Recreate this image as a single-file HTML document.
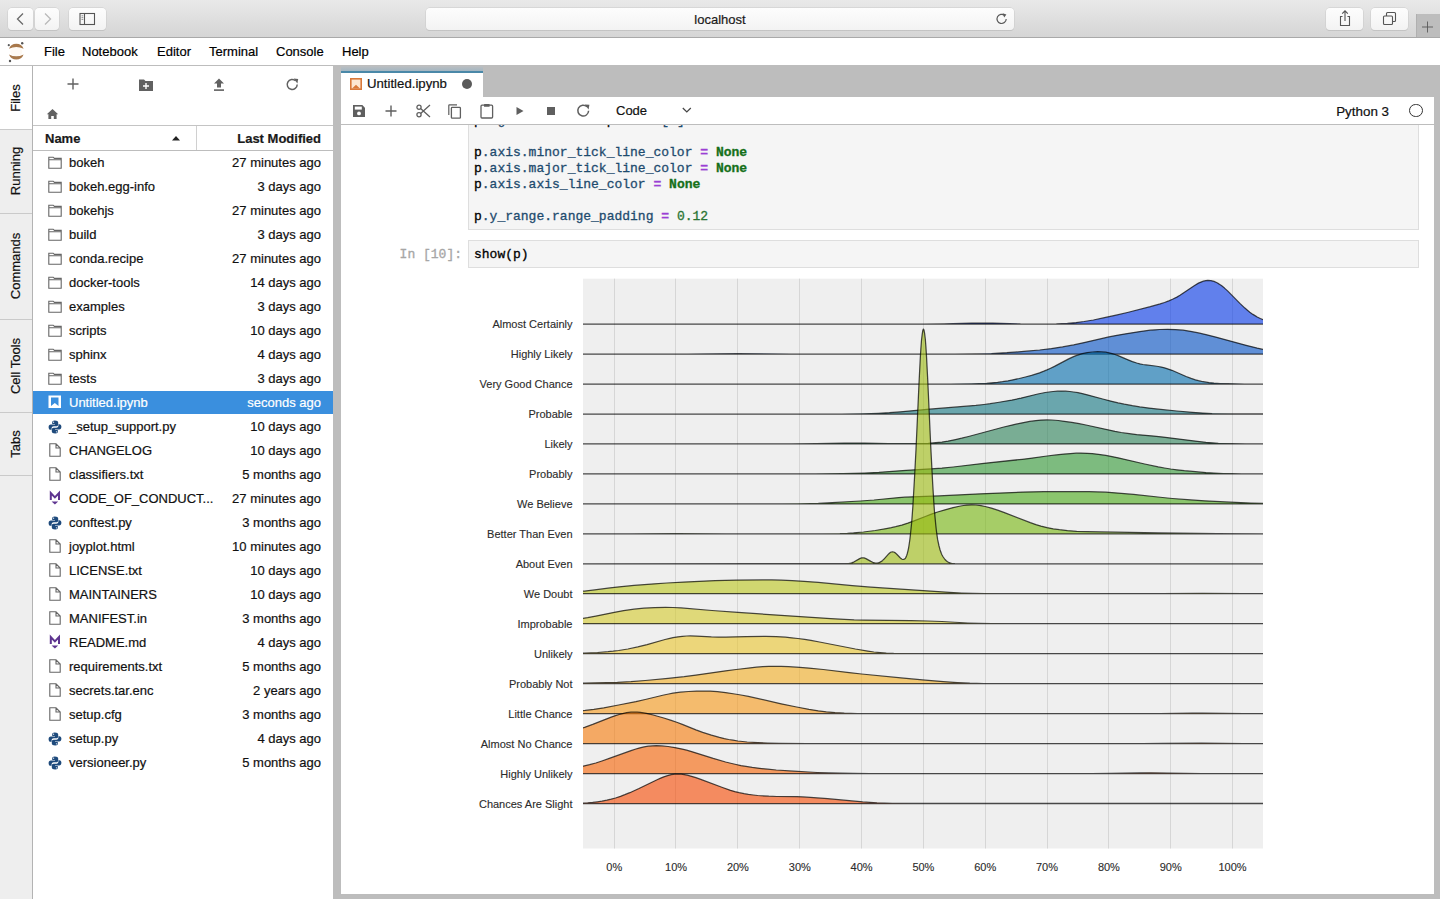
<!DOCTYPE html><html><head><meta charset="utf-8"><style>
*{box-sizing:border-box;margin:0;padding:0}
html,body{width:1440px;height:899px;overflow:hidden;background:#fff;font-family:"Liberation Sans", sans-serif;color:#000}
div{-webkit-text-stroke:0.2px currentColor}
.code{-webkit-text-stroke:0.3px currentColor}
.a{position:absolute}
.btn{position:absolute;top:8px;height:22px;border-radius:4px;background:linear-gradient(#fdfdfd,#f3f3f3);box-shadow:0 0 0 0.5px #c9c9c9,0 1px 0.5px rgba(0,0,0,.12)}
.menu{position:absolute;top:44px;font-size:13px;line-height:16px;color:#000}
.stab{position:absolute;left:0;width:32px;background:#eee;border-bottom:1px solid #c9c9c9}
.stab span{position:absolute;left:calc(50% - 1.5px);top:50%;transform:translate(-50%,-50%) rotate(-90deg);font-size:13px;white-space:nowrap;color:#111}
.row{position:absolute;left:33px;width:300px;height:24px;font-size:13px;color:#111}
.row .n{position:absolute;left:36px;top:4.5px;line-height:16px}
.row .d{position:absolute;right:12px;top:4.5px;line-height:16px}
.row svg{position:absolute;left:15px;top:6px}
.code{font-family:"Liberation Mono", monospace;font-size:13px;line-height:16px;white-space:pre;color:#000}
</style></head><body><div class="a" style="left:0;top:0;width:1440px;height:38px;background:linear-gradient(#e9e9e9,#d5d5d5);border-bottom:1px solid #a9a9a9"></div><div class="btn" style="left:8px;width:25px"></div><div class="btn" style="left:35px;width:24px"></div><svg class="a" style="left:14px;top:12px" width="14" height="14"><path d="M9 1.5 L3.5 7 L9 12.5" fill="none" stroke="#6a6a6a" stroke-width="1.3"/></svg><svg class="a" style="left:40px;top:12px" width="14" height="14"><path d="M5 1.5 L10.5 7 L5 12.5" fill="none" stroke="#b9b9b9" stroke-width="1.3"/></svg><div class="btn" style="left:69px;width:37px"></div><svg class="a" style="left:79px;top:12px" width="17" height="14"><rect x="1" y="1.5" width="14.5" height="11" fill="none" stroke="#555" stroke-width="1.1"/><line x1="5.5" y1="1.5" x2="5.5" y2="12.5" stroke="#555" stroke-width="1.1"/><line x1="2.5" y1="3.8" x2="4.3" y2="3.8" stroke="#777" stroke-width=".8"/><line x1="2.5" y1="5.6" x2="4.3" y2="5.6" stroke="#777" stroke-width=".8"/><line x1="2.5" y1="7.4" x2="4.3" y2="7.4" stroke="#777" stroke-width=".8"/></svg><div class="btn" style="left:426px;width:588px"></div><div class="a" style="left:426px;top:11.5px;width:588px;text-align:center;font-size:13px;line-height:16px;color:#1a1a1a;padding-left:0px">localhost</div><svg class="a" style="left:995px;top:12px" width="14" height="14"><path d="M11.2 7 A4.6 4.6 0 1 1 9.6 3.4" fill="none" stroke="#5a5a5a" stroke-width="1.2"/><path d="M7.6 1.2 L11.4 2.6 L9.2 5.6 Z" fill="#5a5a5a"/></svg><div class="btn" style="left:1326px;width:37px"></div><svg class="a" style="left:1336px;top:9px" width="18" height="18"><path d="M6.5 7.5 H4.5 V16.5 H13.5 V7.5 H11.5" fill="none" stroke="#555" stroke-width="1.1"/><path d="M9 12 V2.2 M6.2 4.6 L9 1.8 L11.8 4.6" fill="none" stroke="#555" stroke-width="1.1"/></svg><div class="btn" style="left:1371px;width:37px"></div><svg class="a" style="left:1381px;top:10px" width="18" height="18"><rect x="2.5" y="6" width="9" height="8.5" rx="1" fill="none" stroke="#555" stroke-width="1.1"/><path d="M5.5 6 V3.5 A1 1 0 0 1 6.5 2.5 H13.5 A1 1 0 0 1 14.5 3.5 V10.5 A1 1 0 0 1 13.5 11.5 H11.5" fill="none" stroke="#555" stroke-width="1.1"/></svg><div class="a" style="left:1416px;top:14px;width:24px;height:23px;background:#bdbdbd;border-left:1px solid #b0b0b0"></div><svg class="a" style="left:1421px;top:20px" width="14" height="14"><path d="M6.5 1.5 V12.5 M1 7 H12" stroke="#5a5a5a" stroke-width="0.9"/></svg><div class="a" style="left:0;top:38px;width:1440px;height:28px;background:#fff;border-bottom:1px solid #bdbdbd"></div><svg class="a" style="left:7px;top:41px" width="20" height="22" viewBox="0 0 20 22">
<ellipse cx="9.3" cy="10.5" rx="6" ry="5" fill="#fef9f3"/>
<path d="M2.0 7.8 A7.8 7.8 0 0 1 16.6 7.8 Q9.3 4.2 2.0 7.8 Z" fill="#a8784a"/>
<path d="M2.0 13.4 A7.8 7.8 0 0 0 16.6 13.4 Q9.3 17.2 2.0 13.4 Z" fill="#a8784a"/>
<circle cx="15.2" cy="2.2" r="1.2" fill="#555"/><circle cx="1.8" cy="4.2" r="1.1" fill="#5a5a5a"/><circle cx="3" cy="20" r="1.2" fill="#555"/>
</svg><div class="menu" style="left:44px">File</div><div class="menu" style="left:82px">Notebook</div><div class="menu" style="left:157px">Editor</div><div class="menu" style="left:209px">Terminal</div><div class="menu" style="left:276px">Console</div><div class="menu" style="left:342px">Help</div><div class="a" style="left:0;top:66px;width:33px;height:833px;background:#eee;border-right:1px solid #b3b3b3"></div><div class="stab" style="top:66px;height:63px;background:#fff;border-bottom:none"><span>Files</span></div><div class="stab" style="top:129px;height:84px;background:#eee;border-bottom:none"><span>Running</span></div><div class="stab" style="top:213px;height:106px;background:#eee;border-bottom:none"><span>Commands</span></div><div class="stab" style="top:319px;height:93px;background:#eee;border-bottom:none"><span>Cell Tools</span></div><div class="stab" style="top:412px;height:63px;background:#eee;border-bottom:none"><span>Tabs</span></div><div class="a" style="left:0;top:129px;width:32px;height:1px;background:#cacaca"></div><div class="a" style="left:0;top:213px;width:32px;height:1px;background:#cacaca"></div><div class="a" style="left:0;top:319px;width:32px;height:1px;background:#cacaca"></div><div class="a" style="left:0;top:412px;width:32px;height:1px;background:#cacaca"></div><div class="a" style="left:0;top:475px;width:32px;height:1px;background:#cacaca"></div><div class="a" style="left:33px;top:66px;width:300px;height:833px;background:#fff"></div><svg class="a" style="left:66px;top:77px" width="14" height="14"><path d="M7 1.5 V12.5 M1.5 7 H12.5" stroke="#616161" stroke-width="1.4"/></svg><svg class="a" style="left:138px;top:77px" width="16" height="16"><path d="M1 2.5 H6 L7.5 4 H15 V14 H1 Z" fill="#616161"/><path d="M8 6 V12 M5 9 H11" stroke="#fff" stroke-width="1.4"/></svg><svg class="a" style="left:212px;top:77px" width="14" height="16"><path d="M7 1.5 L12 6.5 H9 V10.5 H5 V6.5 H2 Z" fill="#616161"/><rect x="2" y="12.3" width="10" height="1.6" fill="#616161"/></svg><svg class="a" style="left:285px;top:77px" width="15" height="15"><path d="M12.2 7.5 A5 5 0 1 1 10.6 3.8" fill="none" stroke="#616161" stroke-width="1.5"/><path d="M8.6 1.6 L13.2 2 L12.4 6.4 Z" fill="#616161"/></svg><svg class="a" style="left:46px;top:108px" width="13" height="12"><path d="M6.5 1 L12.2 6.2 H10.6 V11 H7.8 V8 H5.2 V11 H2.4 V6.2 H0.8 Z" fill="#616161"/></svg><div class="a" style="left:33px;top:125px;width:300px;height:26px;border-top:1px solid #c4c4c4;border-bottom:1px solid #bdbdbd"></div><div class="a" style="left:196px;top:126px;width:1px;height:24px;background:#d0d0d0"></div><div class="a" style="left:45px;top:131px;font-size:13px;line-height:16px;font-weight:bold;color:#1a1a1a">Name</div><svg class="a" style="left:171px;top:135px" width="10" height="6"><path d="M1 5.5 L5 1 L9 5.5 Z" fill="#222"/></svg><div class="a" style="left:200px;top:131px;width:121px;text-align:right;font-size:13px;line-height:16px;font-weight:bold;color:#1a1a1a">Last Modified</div><div class="row" style="top:150px;"><svg width="14" height="13" style="left:15px;top:6px"><path d="M0.8 1.2 H5.2 L6.4 2.4 H13.2 V12.2 H0.8 Z M0.8 3.8 H13.2" fill="none" stroke="#666" stroke-width="1.1"/></svg><div class="n">bokeh</div><div class="d">27 minutes ago</div></div><div class="row" style="top:174px;"><svg width="14" height="13" style="left:15px;top:6px"><path d="M0.8 1.2 H5.2 L6.4 2.4 H13.2 V12.2 H0.8 Z M0.8 3.8 H13.2" fill="none" stroke="#666" stroke-width="1.1"/></svg><div class="n">bokeh.egg-info</div><div class="d">3 days ago</div></div><div class="row" style="top:198px;"><svg width="14" height="13" style="left:15px;top:6px"><path d="M0.8 1.2 H5.2 L6.4 2.4 H13.2 V12.2 H0.8 Z M0.8 3.8 H13.2" fill="none" stroke="#666" stroke-width="1.1"/></svg><div class="n">bokehjs</div><div class="d">27 minutes ago</div></div><div class="row" style="top:222px;"><svg width="14" height="13" style="left:15px;top:6px"><path d="M0.8 1.2 H5.2 L6.4 2.4 H13.2 V12.2 H0.8 Z M0.8 3.8 H13.2" fill="none" stroke="#666" stroke-width="1.1"/></svg><div class="n">build</div><div class="d">3 days ago</div></div><div class="row" style="top:246px;"><svg width="14" height="13" style="left:15px;top:6px"><path d="M0.8 1.2 H5.2 L6.4 2.4 H13.2 V12.2 H0.8 Z M0.8 3.8 H13.2" fill="none" stroke="#666" stroke-width="1.1"/></svg><div class="n">conda.recipe</div><div class="d">27 minutes ago</div></div><div class="row" style="top:270px;"><svg width="14" height="13" style="left:15px;top:6px"><path d="M0.8 1.2 H5.2 L6.4 2.4 H13.2 V12.2 H0.8 Z M0.8 3.8 H13.2" fill="none" stroke="#666" stroke-width="1.1"/></svg><div class="n">docker-tools</div><div class="d">14 days ago</div></div><div class="row" style="top:294px;"><svg width="14" height="13" style="left:15px;top:6px"><path d="M0.8 1.2 H5.2 L6.4 2.4 H13.2 V12.2 H0.8 Z M0.8 3.8 H13.2" fill="none" stroke="#666" stroke-width="1.1"/></svg><div class="n">examples</div><div class="d">3 days ago</div></div><div class="row" style="top:318px;"><svg width="14" height="13" style="left:15px;top:6px"><path d="M0.8 1.2 H5.2 L6.4 2.4 H13.2 V12.2 H0.8 Z M0.8 3.8 H13.2" fill="none" stroke="#666" stroke-width="1.1"/></svg><div class="n">scripts</div><div class="d">10 days ago</div></div><div class="row" style="top:342px;"><svg width="14" height="13" style="left:15px;top:6px"><path d="M0.8 1.2 H5.2 L6.4 2.4 H13.2 V12.2 H0.8 Z M0.8 3.8 H13.2" fill="none" stroke="#666" stroke-width="1.1"/></svg><div class="n">sphinx</div><div class="d">4 days ago</div></div><div class="row" style="top:366px;"><svg width="14" height="13" style="left:15px;top:6px"><path d="M0.8 1.2 H5.2 L6.4 2.4 H13.2 V12.2 H0.8 Z M0.8 3.8 H13.2" fill="none" stroke="#666" stroke-width="1.1"/></svg><div class="n">tests</div><div class="d">3 days ago</div></div><div class="a" style="left:33px;top:391px;width:300px;height:23px;background:#3a8fde"></div><div class="row" style="top:390px;color:#fff;"><svg width="14" height="14" style="left:15px;top:5px"><rect x="0.5" y="0.5" width="12.5" height="12.5" fill="#fff"/><path d="M3 2.5 H10.5 V11 L6.8 8 L3 11 Z" fill="#3a8fde"/></svg><div class="n">Untitled.ipynb</div><div class="d">seconds ago</div></div><div class="row" style="top:414px;"><svg width="14" height="14" style="left:15px;top:5.5px" viewBox="0 0 14 14"><path d="M6.8 0.6 C4.4 0.6 4.2 1.6 4.2 2.6 V4 H7 V4.6 H2.8 C1.4 4.6 0.6 5.6 0.6 7.2 C0.6 8.8 1.4 9.8 2.6 9.8 H3.6 V8.2 C3.6 7 4.6 6.2 5.8 6.2 H8.4 C9.4 6.2 10.2 5.4 10.2 4.4 V2.6 C10.2 1.4 9 0.6 6.8 0.6 Z" fill="#1e4a7c"/><path d="M7.2 13.4 C9.6 13.4 9.8 12.4 9.8 11.4 V10 H7 V9.4 H11.2 C12.6 9.4 13.4 8.4 13.4 6.8 C13.4 5.2 12.6 4.2 11.4 4.2 H10.4 V5.8 C10.4 7 9.4 7.8 8.2 7.8 H5.6 C4.6 7.8 3.8 8.6 3.8 9.6 V11.4 C3.8 12.6 5 13.4 7.2 13.4 Z" fill="#1e4a7c"/><circle cx="5.6" cy="2.2" r="0.6" fill="#fff"/><circle cx="8.4" cy="11.8" r="0.6" fill="#fff"/></svg><div class="n">_setup_support.py</div><div class="d">10 days ago</div></div><div class="row" style="top:438px;"><svg width="14" height="14" style="left:15px;top:5px"><path d="M1.8 0.8 H8 L12.2 5 V13.2 H1.8 Z M8 0.8 V5 H12.2" fill="none" stroke="#666" stroke-width="1.1"/></svg><div class="n">CHANGELOG</div><div class="d">10 days ago</div></div><div class="row" style="top:462px;"><svg width="14" height="14" style="left:15px;top:5px"><path d="M1.8 0.8 H8 L12.2 5 V13.2 H1.8 Z M8 0.8 V5 H12.2" fill="none" stroke="#666" stroke-width="1.1"/></svg><div class="n">classifiers.txt</div><div class="d">5 months ago</div></div><div class="row" style="top:486px;"><svg width="14" height="16" style="left:15px;top:4px" viewBox="0 0 14 16"><path d="M2.8 10 V3 L6.9 7.4 L11 3 V10" fill="none" stroke="#5e3590" stroke-width="2" stroke-linejoin="miter" stroke-miterlimit="3"/><path d="M3.6 11.4 H10.2 L6.9 14.4 Z" fill="#5e3590"/></svg><div class="n">CODE_OF_CONDUCT...</div><div class="d">27 minutes ago</div></div><div class="row" style="top:510px;"><svg width="14" height="14" style="left:15px;top:5.5px" viewBox="0 0 14 14"><path d="M6.8 0.6 C4.4 0.6 4.2 1.6 4.2 2.6 V4 H7 V4.6 H2.8 C1.4 4.6 0.6 5.6 0.6 7.2 C0.6 8.8 1.4 9.8 2.6 9.8 H3.6 V8.2 C3.6 7 4.6 6.2 5.8 6.2 H8.4 C9.4 6.2 10.2 5.4 10.2 4.4 V2.6 C10.2 1.4 9 0.6 6.8 0.6 Z" fill="#1e4a7c"/><path d="M7.2 13.4 C9.6 13.4 9.8 12.4 9.8 11.4 V10 H7 V9.4 H11.2 C12.6 9.4 13.4 8.4 13.4 6.8 C13.4 5.2 12.6 4.2 11.4 4.2 H10.4 V5.8 C10.4 7 9.4 7.8 8.2 7.8 H5.6 C4.6 7.8 3.8 8.6 3.8 9.6 V11.4 C3.8 12.6 5 13.4 7.2 13.4 Z" fill="#1e4a7c"/><circle cx="5.6" cy="2.2" r="0.6" fill="#fff"/><circle cx="8.4" cy="11.8" r="0.6" fill="#fff"/></svg><div class="n">conftest.py</div><div class="d">3 months ago</div></div><div class="row" style="top:534px;"><svg width="14" height="14" style="left:15px;top:5px"><path d="M1.8 0.8 H8 L12.2 5 V13.2 H1.8 Z M8 0.8 V5 H12.2" fill="none" stroke="#666" stroke-width="1.1"/></svg><div class="n">joyplot.html</div><div class="d">10 minutes ago</div></div><div class="row" style="top:558px;"><svg width="14" height="14" style="left:15px;top:5px"><path d="M1.8 0.8 H8 L12.2 5 V13.2 H1.8 Z M8 0.8 V5 H12.2" fill="none" stroke="#666" stroke-width="1.1"/></svg><div class="n">LICENSE.txt</div><div class="d">10 days ago</div></div><div class="row" style="top:582px;"><svg width="14" height="14" style="left:15px;top:5px"><path d="M1.8 0.8 H8 L12.2 5 V13.2 H1.8 Z M8 0.8 V5 H12.2" fill="none" stroke="#666" stroke-width="1.1"/></svg><div class="n">MAINTAINERS</div><div class="d">10 days ago</div></div><div class="row" style="top:606px;"><svg width="14" height="14" style="left:15px;top:5px"><path d="M1.8 0.8 H8 L12.2 5 V13.2 H1.8 Z M8 0.8 V5 H12.2" fill="none" stroke="#666" stroke-width="1.1"/></svg><div class="n">MANIFEST.in</div><div class="d">3 months ago</div></div><div class="row" style="top:630px;"><svg width="14" height="16" style="left:15px;top:4px" viewBox="0 0 14 16"><path d="M2.8 10 V3 L6.9 7.4 L11 3 V10" fill="none" stroke="#5e3590" stroke-width="2" stroke-linejoin="miter" stroke-miterlimit="3"/><path d="M3.6 11.4 H10.2 L6.9 14.4 Z" fill="#5e3590"/></svg><div class="n">README.md</div><div class="d">4 days ago</div></div><div class="row" style="top:654px;"><svg width="14" height="14" style="left:15px;top:5px"><path d="M1.8 0.8 H8 L12.2 5 V13.2 H1.8 Z M8 0.8 V5 H12.2" fill="none" stroke="#666" stroke-width="1.1"/></svg><div class="n">requirements.txt</div><div class="d">5 months ago</div></div><div class="row" style="top:678px;"><svg width="14" height="14" style="left:15px;top:5px"><path d="M1.8 0.8 H8 L12.2 5 V13.2 H1.8 Z M8 0.8 V5 H12.2" fill="none" stroke="#666" stroke-width="1.1"/></svg><div class="n">secrets.tar.enc</div><div class="d">2 years ago</div></div><div class="row" style="top:702px;"><svg width="14" height="14" style="left:15px;top:5px"><path d="M1.8 0.8 H8 L12.2 5 V13.2 H1.8 Z M8 0.8 V5 H12.2" fill="none" stroke="#666" stroke-width="1.1"/></svg><div class="n">setup.cfg</div><div class="d">3 months ago</div></div><div class="row" style="top:726px;"><svg width="14" height="14" style="left:15px;top:5.5px" viewBox="0 0 14 14"><path d="M6.8 0.6 C4.4 0.6 4.2 1.6 4.2 2.6 V4 H7 V4.6 H2.8 C1.4 4.6 0.6 5.6 0.6 7.2 C0.6 8.8 1.4 9.8 2.6 9.8 H3.6 V8.2 C3.6 7 4.6 6.2 5.8 6.2 H8.4 C9.4 6.2 10.2 5.4 10.2 4.4 V2.6 C10.2 1.4 9 0.6 6.8 0.6 Z" fill="#1e4a7c"/><path d="M7.2 13.4 C9.6 13.4 9.8 12.4 9.8 11.4 V10 H7 V9.4 H11.2 C12.6 9.4 13.4 8.4 13.4 6.8 C13.4 5.2 12.6 4.2 11.4 4.2 H10.4 V5.8 C10.4 7 9.4 7.8 8.2 7.8 H5.6 C4.6 7.8 3.8 8.6 3.8 9.6 V11.4 C3.8 12.6 5 13.4 7.2 13.4 Z" fill="#1e4a7c"/><circle cx="5.6" cy="2.2" r="0.6" fill="#fff"/><circle cx="8.4" cy="11.8" r="0.6" fill="#fff"/></svg><div class="n">setup.py</div><div class="d">4 days ago</div></div><div class="row" style="top:750px;"><svg width="14" height="14" style="left:15px;top:5.5px" viewBox="0 0 14 14"><path d="M6.8 0.6 C4.4 0.6 4.2 1.6 4.2 2.6 V4 H7 V4.6 H2.8 C1.4 4.6 0.6 5.6 0.6 7.2 C0.6 8.8 1.4 9.8 2.6 9.8 H3.6 V8.2 C3.6 7 4.6 6.2 5.8 6.2 H8.4 C9.4 6.2 10.2 5.4 10.2 4.4 V2.6 C10.2 1.4 9 0.6 6.8 0.6 Z" fill="#1e4a7c"/><path d="M7.2 13.4 C9.6 13.4 9.8 12.4 9.8 11.4 V10 H7 V9.4 H11.2 C12.6 9.4 13.4 8.4 13.4 6.8 C13.4 5.2 12.6 4.2 11.4 4.2 H10.4 V5.8 C10.4 7 9.4 7.8 8.2 7.8 H5.6 C4.6 7.8 3.8 8.6 3.8 9.6 V11.4 C3.8 12.6 5 13.4 7.2 13.4 Z" fill="#1e4a7c"/><circle cx="5.6" cy="2.2" r="0.6" fill="#fff"/><circle cx="8.4" cy="11.8" r="0.6" fill="#fff"/></svg><div class="n">versioneer.py</div><div class="d">5 months ago</div></div><div class="a" style="left:333px;top:66px;width:1107px;height:833px;background:#bdbdbd"></div><div class="a" style="left:341px;top:66px;width:142px;height:5px;background:linear-gradient(#bdbfc1,#a3b6c2)"></div><div class="a" style="left:341px;top:71px;width:142px;height:27px;background:#fff;border-top:2px solid #4a88a8"></div><svg class="a" style="left:350px;top:78px" width="12" height="12"><rect x="0.8" y="0.8" width="10.4" height="10.4" fill="#fde7d3" stroke="#d9793a" stroke-width="1.6"/><path d="M2 10.5 L6 6.8 L10 10.5 Z" fill="#d9793a"/></svg><div class="a" style="left:367px;top:76px;font-size:13.2px;line-height:16px;color:#111">Untitled.ipynb</div><div class="a" style="left:462px;top:79px;width:10px;height:10px;border-radius:50%;background:#5a5a5a"></div><div class="a" style="left:341px;top:97px;width:1093px;height:797px;background:#fff"></div><div class="a" style="left:341px;top:97px;width:1093px;height:28px;background:#fff;border-bottom:1px solid #bdbdbd"></div><svg class="a" style="left:353px;top:105px" width="12" height="12"><path d="M0 0 H9.3 L12 2.7 V12 H0 Z" fill="#5f5f5f"/><rect x="1.8" y="1.6" width="7" height="3" fill="#fff"/><circle cx="6" cy="8.4" r="1.9" fill="#fff"/></svg><svg class="a" style="left:385px;top:105px" width="12" height="12"><path d="M6 0.5 V11.5 M0.5 6 H11.5" stroke="#5f5f5f" stroke-width="1.4"/></svg><svg class="a" style="left:416px;top:104px" width="15" height="14"><circle cx="3" cy="3.2" r="2.1" fill="none" stroke="#5f5f5f" stroke-width="1.3"/><circle cx="3" cy="10.8" r="2.1" fill="none" stroke="#5f5f5f" stroke-width="1.3"/><path d="M4.6 4.6 L14 13 M4.6 9.4 L14 1" stroke="#5f5f5f" stroke-width="1.3"/></svg><svg class="a" style="left:448px;top:104px" width="14" height="15"><path d="M0.8 11 V1.4 A0.6 0.6 0 0 1 1.4 0.8 H9" fill="none" stroke="#5f5f5f" stroke-width="1.2"/><rect x="3.4" y="3.4" width="9" height="10.8" rx="0.8" fill="none" stroke="#5f5f5f" stroke-width="1.3"/></svg><svg class="a" style="left:480px;top:103px" width="14" height="16"><rect x="1" y="2.2" width="11.6" height="12.8" rx="1" fill="none" stroke="#5f5f5f" stroke-width="1.3"/><rect x="4" y="1" width="5.6" height="2.8" rx="0.6" fill="#5f5f5f"/></svg><svg class="a" style="left:515px;top:106px" width="10" height="10"><path d="M1.5 1 L8.5 5 L1.5 9 Z" fill="#5f5f5f"/></svg><svg class="a" style="left:546px;top:106px" width="10" height="10"><rect x="1" y="1" width="8" height="8" fill="#5f5f5f"/></svg><svg class="a" style="left:576px;top:103px" width="15" height="15"><path d="M12.6 7.8 A5.4 5.4 0 1 1 11 3.8" fill="none" stroke="#5f5f5f" stroke-width="1.5"/><path d="M8.8 1.4 L13.4 1.8 L12.6 6.4 Z" fill="#5f5f5f"/></svg><div class="a" style="left:616px;top:103px;font-size:13px;line-height:16px;color:#111">Code</div><svg class="a" style="left:682px;top:107px" width="10" height="7"><path d="M0.8 1 L4.8 5 L8.8 1" fill="none" stroke="#444" stroke-width="1.2"/></svg><div class="a" style="left:1320px;top:103.5px;width:69px;text-align:right;font-size:13.4px;line-height:16px;color:#111">Python 3</div><div class="a" style="left:1409px;top:103.5px;width:13.5px;height:13.5px;border-radius:50%;border:1.3px solid #333"></div><div class="a" style="left:341px;top:125px;width:1093px;height:769px;overflow:hidden"><div class="a" style="left:127px;top:-40px;width:951px;height:145px;background:#f5f5f5;border:1px solid #dedede"></div><div class="a code" style="left:133px;top:-12.5px"><span style="color:#000;">p</span><span style="color:#1e4b6e;">.xgrid.ticker</span> <span style="color:#9b3fd4;font-weight:bold;">=</span> <span style="color:#000;">p</span><span style="color:#1e4b6e;">.xaxis[</span><span style="color:#2a7432;">0</span><span style="color:#1e4b6e;">].ticker</span>

<span style="color:#000;">p</span><span style="color:#1e4b6e;">.axis.minor_tick_line_color</span> <span style="color:#9b3fd4;font-weight:bold;">=</span> <span style="color:#16701a;font-weight:bold;">None</span>
<span style="color:#000;">p</span><span style="color:#1e4b6e;">.axis.major_tick_line_color</span> <span style="color:#9b3fd4;font-weight:bold;">=</span> <span style="color:#16701a;font-weight:bold;">None</span>
<span style="color:#000;">p</span><span style="color:#1e4b6e;">.axis.axis_line_color</span> <span style="color:#9b3fd4;font-weight:bold;">=</span> <span style="color:#16701a;font-weight:bold;">None</span>

<span style="color:#000;">p</span><span style="color:#1e4b6e;">.y_range.range_padding</span> <span style="color:#9b3fd4;font-weight:bold;">=</span> <span style="color:#2a7432;">0.12</span></div><div class="a" style="left:127px;top:115px;width:951px;height:28px;background:#f5f5f5;border:1px solid #dedede"></div><div class="a code" style="left:133px;top:121.5px">show(p)</div><div class="a code" style="left:41px;top:121.5px;width:80px;text-align:right;color:#a6a6a6">In [10]:</div></div><svg class="a" style="left:0;top:0" width="1440" height="899" viewBox="0 0 1440 899"><defs><clipPath id="pc"><rect x="583.0" y="278.7" width="680.0" height="569.8"/></clipPath></defs><rect x="583.0" y="278.7" width="680.0" height="569.8" fill="#efefef"/><line x1="614.5" y1="278.7" x2="614.5" y2="848.5" stroke="#d6d6d6" stroke-width="1"/><line x1="675.5" y1="278.7" x2="675.5" y2="848.5" stroke="#d6d6d6" stroke-width="1"/><line x1="737.5" y1="278.7" x2="737.5" y2="848.5" stroke="#d6d6d6" stroke-width="1"/><line x1="799.5" y1="278.7" x2="799.5" y2="848.5" stroke="#d6d6d6" stroke-width="1"/><line x1="861.5" y1="278.7" x2="861.5" y2="848.5" stroke="#d6d6d6" stroke-width="1"/><line x1="923.5" y1="278.7" x2="923.5" y2="848.5" stroke="#d6d6d6" stroke-width="1"/><line x1="985.5" y1="278.7" x2="985.5" y2="848.5" stroke="#d6d6d6" stroke-width="1"/><line x1="1047.5" y1="278.7" x2="1047.5" y2="848.5" stroke="#d6d6d6" stroke-width="1"/><line x1="1108.5" y1="278.7" x2="1108.5" y2="848.5" stroke="#d6d6d6" stroke-width="1"/><line x1="1170.5" y1="278.7" x2="1170.5" y2="848.5" stroke="#d6d6d6" stroke-width="1"/><line x1="1232.5" y1="278.7" x2="1232.5" y2="848.5" stroke="#d6d6d6" stroke-width="1"/><g clip-path="url(#pc)"><path d="M564.8 324.1L923.4 324.1L943.8 323.9L971.6 323.1L982.1 323.0L992.6 323.1L1020.5 323.9L1040.9 324.0L1056.3 323.9L1067.4 323.4L1076.1 322.6L1084.1 321.5L1093.4 320.0L1104.5 317.7L1115.0 315.4L1127.4 312.5L1150.3 306.7L1160.2 303.9L1164.5 302.5L1168.8 300.9L1172.5 299.3L1176.9 297.1L1180.0 295.3L1183.0 293.3L1194.2 285.7L1198.5 283.1L1201.6 281.8L1203.4 281.2L1205.9 280.6L1207.8 280.4L1210.9 280.6L1214.0 281.4L1217.0 282.8L1218.9 283.9L1221.4 285.6L1224.5 288.1L1227.6 290.9L1239.9 303.4L1244.9 308.1L1248.0 310.7L1249.8 312.2L1252.9 314.4L1255.4 315.9L1257.2 317.0L1260.3 318.5L1263.4 319.8L1266.5 320.9L1269.6 321.7L1273.9 322.6L1277.6 323.1L1282.0 323.5L1282.0 324.1Z" fill="#0236ea" fill-opacity="0.6" stroke="#000" stroke-opacity="0.7" stroke-width="1.25" stroke-linejoin="round"/><path d="M564.8 354.1L686.6 354.0L737.9 353.7L791.7 354.0L954.3 354.1L975.9 353.9L991.4 353.5L1006.9 352.7L1026.6 351.2L1039.6 350.0L1051.4 348.6L1062.5 346.9L1073.6 344.9L1084.1 342.6L1108.9 336.9L1116.9 335.3L1125.6 333.8L1139.8 331.6L1150.3 330.2L1155.2 329.8L1159.6 329.5L1167.6 329.3L1175.6 329.6L1183.0 330.2L1190.5 331.3L1198.5 332.9L1205.9 334.6L1215.8 337.1L1246.1 345.3L1257.2 348.1L1263.4 349.5L1269.6 350.7L1275.8 351.7L1282.0 352.5L1282.0 354.1Z" fill="#004fc5" fill-opacity="0.6" stroke="#000" stroke-opacity="0.7" stroke-width="1.25" stroke-linejoin="round"/><path d="M564.8 384.0L950.0 384.0L971.6 383.8L979.0 383.6L986.5 383.3L991.4 382.9L997.6 382.3L1002.5 381.7L1008.1 380.8L1013.0 379.8L1019.2 378.5L1025.4 377.0L1031.6 375.4L1039.6 372.8L1043.9 371.2L1047.0 369.9L1050.1 368.5L1054.5 366.4L1068.7 358.9L1073.0 356.9L1076.7 355.4L1079.2 354.6L1082.3 353.7L1087.2 352.6L1092.2 352.0L1095.3 351.8L1097.7 351.7L1101.4 351.8L1105.8 352.2L1108.9 352.8L1112.0 353.6L1115.0 354.5L1118.1 355.7L1128.6 360.1L1132.4 361.6L1136.7 363.0L1139.8 363.8L1142.9 364.5L1146.0 364.9L1155.2 366.0L1158.3 366.5L1161.4 367.1L1164.5 367.8L1167.6 368.8L1171.9 370.3L1186.1 376.5L1191.1 378.4L1195.4 379.8L1198.5 380.7L1201.6 381.4L1204.7 381.9L1209.0 382.6L1214.0 383.1L1220.1 383.5L1227.6 383.7L1244.9 384.0L1282.0 384.0Z" fill="#006aab" fill-opacity="0.6" stroke="#000" stroke-opacity="0.7" stroke-width="1.25" stroke-linejoin="round"/><path d="M564.8 414.0L841.2 414.0L861.6 413.8L870.9 413.6L878.3 413.3L889.4 412.7L900.5 411.8L929.6 409.2L966.7 406.2L975.9 405.4L984.0 404.5L990.2 403.7L997.6 402.5L1011.8 400.1L1021.1 398.1L1037.8 394.0L1045.2 392.5L1048.9 392.0L1053.2 391.5L1057.5 391.2L1061.3 391.1L1065.6 391.2L1069.9 391.5L1073.6 392.0L1078.0 392.7L1082.3 393.6L1087.2 394.8L1102.7 399.0L1110.7 401.1L1118.1 402.9L1124.3 404.2L1132.4 405.7L1139.8 406.9L1149.0 408.1L1158.3 409.2L1176.9 411.0L1192.3 412.3L1202.8 413.0L1212.1 413.5L1222.0 413.8L1233.7 413.9L1282.0 414.0Z" fill="#117481" fill-opacity="0.6" stroke="#000" stroke-opacity="0.7" stroke-width="1.25" stroke-linejoin="round"/><path d="M564.8 443.9L791.7 443.9L816.5 443.7L844.3 443.1L854.2 443.0L864.7 443.1L888.2 443.5L903.0 443.6L917.2 443.6L928.3 443.3L935.8 442.7L941.9 442.1L948.1 441.1L955.5 439.6L961.7 438.2L968.5 436.5L1003.8 427.0L1013.0 424.8L1022.3 422.8L1029.7 421.4L1035.9 420.6L1040.9 420.1L1047.0 419.9L1052.0 420.0L1058.2 420.5L1064.3 421.3L1071.8 422.4L1079.2 423.7L1086.0 425.0L1115.0 431.3L1121.2 432.5L1127.4 433.4L1136.7 434.6L1154.0 436.1L1163.3 437.1L1197.3 441.3L1205.9 442.3L1212.1 442.8L1218.3 443.3L1230.6 443.7L1246.1 443.9L1282.0 443.9Z" fill="#298157" fill-opacity="0.6" stroke="#000" stroke-opacity="0.7" stroke-width="1.25" stroke-linejoin="round"/><path d="M564.8 473.9L815.2 473.9L843.0 473.6L864.7 473.0L878.9 472.3L906.1 470.3L930.8 468.9L941.9 468.1L953.1 467.0L984.0 463.3L1022.3 459.3L1030.3 458.3L1047.0 456.0L1056.3 454.9L1063.7 454.1L1070.5 453.6L1076.1 453.2L1081.0 453.1L1087.2 453.3L1092.2 453.6L1098.4 454.3L1105.8 455.4L1112.0 456.6L1118.1 457.8L1144.7 464.0L1158.3 466.9L1164.5 468.0L1170.7 469.0L1176.9 469.8L1184.3 470.7L1195.4 471.7L1205.9 472.6L1214.0 473.1L1223.2 473.5L1231.3 473.7L1241.8 473.9L1282.0 473.9Z" fill="#319733" fill-opacity="0.6" stroke="#000" stroke-opacity="0.7" stroke-width="1.25" stroke-linejoin="round"/><path d="M564.8 503.9L781.2 503.9L797.9 503.8L810.3 503.6L818.3 503.4L827.6 502.9L860.3 501.0L873.9 500.0L898.7 497.6L904.9 497.2L912.3 496.8L938.9 495.9L980.3 493.8L1022.3 492.1L1033.4 491.8L1043.9 491.7L1078.0 491.7L1089.1 491.7L1097.7 491.9L1105.8 492.2L1115.0 492.8L1133.6 494.4L1162.6 497.5L1172.5 498.5L1187.4 499.7L1204.7 500.8L1220.1 501.7L1251.0 503.1L1263.4 503.5L1282.0 503.8L1282.0 503.9Z" fill="#48a916" fill-opacity="0.6" stroke="#000" stroke-opacity="0.7" stroke-width="1.25" stroke-linejoin="round"/><path d="M564.8 533.8L629.8 533.8L676.1 533.5L726.8 533.8L821.4 533.8L839.9 533.6L847.4 533.3L853.5 532.9L863.4 532.0L875.2 530.5L886.3 528.6L891.3 527.7L895.6 526.7L901.8 525.1L907.9 523.1L914.1 520.8L925.3 516.5L931.4 514.1L937.6 512.0L945.0 509.8L953.1 507.6L960.5 506.0L963.6 505.5L966.7 505.1L971.6 504.9L975.9 505.0L980.9 505.6L985.2 506.5L991.4 508.2L997.6 510.2L1003.8 512.4L1030.3 522.7L1035.9 524.6L1040.9 526.1L1047.0 527.6L1053.2 528.8L1059.4 529.7L1067.4 530.6L1076.7 531.3L1087.2 531.7L1158.3 532.9L1217.0 533.7L1282.0 533.8Z" fill="#75b60b" fill-opacity="0.6" stroke="#000" stroke-opacity="0.7" stroke-width="1.25" stroke-linejoin="round"/><path d="M564.8 563.8L844.3 563.7L848.6 563.5L850.5 563.1L851.7 562.8L854.2 561.8L859.7 558.6L861.6 557.9L862.8 557.8L864.1 557.9L865.9 558.6L870.9 561.4L872.7 562.3L874.6 562.8L876.4 563.0L877.7 562.9L878.9 562.6L880.1 562.1L881.4 561.4L882.6 560.4L883.8 559.3L888.2 554.4L889.4 553.2L890.6 552.3L891.3 552.0L892.5 551.8L893.7 552.0L894.3 552.3L895.6 553.1L896.8 554.3L899.9 557.5L901.1 558.6L901.8 559.0L902.4 559.3L903.0 559.5L903.6 559.4L904.2 559.2L904.9 558.8L905.5 558.0L906.1 556.9L906.7 555.4L907.3 553.5L907.9 551.1L908.6 548.0L909.8 540.0L910.4 534.9L911.7 522.2L912.9 505.9L914.7 474.5L916.0 449.5L919.1 381.5L920.3 357.9L920.9 348.2L921.5 340.2L922.2 334.3L922.8 330.5L923.4 329.1L924.0 330.1L924.6 333.4L925.3 339.0L925.9 346.6L926.5 356.1L927.7 379.3L930.8 447.5L932.7 483.9L933.9 503.6L934.5 511.8L935.8 525.4L936.4 530.8L937.6 539.4L938.9 545.5L940.1 550.0L941.3 553.3L941.9 554.7L943.2 557.0L945.0 559.5L946.3 560.8L947.5 561.7L949.4 562.7L950.6 563.1L951.8 563.3L954.9 563.7L960.5 563.8L1282.0 563.8Z" fill="#9cbb0e" fill-opacity="0.6" stroke="#000" stroke-opacity="0.7" stroke-width="1.25" stroke-linejoin="round"/><path d="M564.8 593.7L564.8 592.4L576.0 591.8L584.6 591.1L592.7 590.2L610.0 587.9L619.2 586.8L634.1 585.4L654.5 583.8L666.8 583.0L683.5 582.1L715.1 580.6L736.1 580.1L762.7 579.9L771.9 579.9L781.2 580.2L792.3 580.7L804.1 581.3L818.3 582.4L852.3 585.7L870.9 587.2L949.4 592.3L961.7 593.0L972.9 593.4L985.2 593.6L1000.7 593.7L1136.7 593.7L1161.4 593.7L1202.8 593.3L1243.6 593.7L1282.0 593.7Z" fill="#bac71b" fill-opacity="0.6" stroke="#000" stroke-opacity="0.7" stroke-width="1.25" stroke-linejoin="round"/><path d="M564.8 623.7L564.8 620.3L577.2 619.1L582.2 618.4L587.7 617.6L595.8 616.1L614.3 612.3L623.6 610.6L634.1 609.2L644.0 608.2L654.5 607.6L665.6 607.3L673.0 607.5L681.1 607.9L712.0 610.5L737.9 612.4L830.7 618.6L844.3 619.4L854.2 619.9L864.7 620.1L911.0 620.6L927.7 621.0L941.9 621.5L967.9 623.0L979.0 623.4L991.4 623.6L1009.9 623.7L1282.0 623.7Z" fill="#d4ca29" fill-opacity="0.6" stroke="#000" stroke-opacity="0.7" stroke-width="1.25" stroke-linejoin="round"/><path d="M564.8 653.7L564.8 653.5L575.4 653.4L584.6 653.1L597.6 652.5L608.1 651.7L613.1 651.2L618.6 650.5L627.9 649.0L637.8 646.9L647.1 644.6L665.0 639.5L669.9 638.3L673.0 637.7L678.0 636.8L682.3 636.3L686.6 636.0L690.3 635.9L696.5 636.1L711.4 636.9L718.2 637.1L725.6 637.1L746.0 636.6L765.8 636.4L776.3 636.6L785.5 637.2L791.7 637.8L797.9 638.5L804.7 639.4L810.9 640.4L819.5 642.0L855.4 649.0L867.8 651.1L873.9 652.0L880.1 652.6L886.3 653.1L893.7 653.4L904.9 653.6L922.2 653.7L1282.0 653.7Z" fill="#eac52c" fill-opacity="0.6" stroke="#000" stroke-opacity="0.7" stroke-width="1.25" stroke-linejoin="round"/><path d="M564.8 683.6L564.8 683.5L584.6 683.1L617.4 682.3L631.0 681.6L645.2 680.5L668.1 678.4L684.2 676.7L695.9 675.1L725.6 670.8L736.1 669.5L750.3 667.8L756.5 667.2L762.7 666.7L768.8 666.3L773.8 666.3L781.2 666.4L788.6 666.7L799.8 667.4L809.0 668.1L823.3 669.5L849.2 672.6L861.6 674.0L903.6 678.2L925.3 680.2L943.2 681.6L957.4 682.6L969.8 683.2L984.0 683.5L1003.8 683.6L1282.0 683.6Z" fill="#f4ae20" fill-opacity="0.6" stroke="#000" stroke-opacity="0.7" stroke-width="1.25" stroke-linejoin="round"/><path d="M564.8 713.6L564.8 711.8L576.0 711.2L585.2 710.4L593.9 709.3L603.8 707.8L618.6 705.0L635.9 701.6L645.2 699.5L663.8 695.0L668.7 694.0L673.0 693.2L680.4 692.2L688.5 691.5L696.5 691.1L703.9 691.0L710.1 691.1L717.5 691.7L725.6 692.6L734.8 694.0L741.0 695.0L748.4 696.4L781.2 703.8L796.7 707.0L809.0 709.3L818.3 710.8L826.3 711.8L835.0 712.6L844.3 713.1L857.3 713.5L877.0 713.6L1129.3 713.6L1160.2 713.5L1192.3 713.1L1202.8 713.0L1243.6 713.5L1282.0 713.6Z" fill="#f79815" fill-opacity="0.6" stroke="#000" stroke-opacity="0.7" stroke-width="1.25" stroke-linejoin="round"/><path d="M564.8 743.5L564.8 732.5L575.4 730.0L580.3 728.6L584.6 727.3L592.7 724.4L611.2 717.1L615.5 715.6L619.2 714.5L623.6 713.3L626.7 712.7L631.0 712.2L634.7 712.0L637.2 712.1L640.3 712.4L643.4 712.8L646.4 713.4L653.2 715.0L663.8 718.0L671.2 720.4L677.4 722.5L682.3 724.4L695.9 729.9L702.7 732.4L711.4 735.2L719.4 737.4L724.3 738.6L728.7 739.5L733.0 740.2L737.9 741.0L747.2 742.0L757.7 742.6L767.6 743.0L779.4 743.3L807.2 743.5L1142.9 743.5L1163.3 743.4L1201.6 743.0L1243.6 743.5L1282.0 743.5Z" fill="#f77a07" fill-opacity="0.6" stroke="#000" stroke-opacity="0.7" stroke-width="1.25" stroke-linejoin="round"/><path d="M564.8 773.5L564.8 768.8L572.3 767.9L578.4 767.0L583.4 766.1L589.6 764.7L595.8 763.0L601.9 761.0L610.0 758.2L631.0 750.7L635.9 749.0L639.0 748.1L644.0 746.9L648.3 746.2L652.6 745.8L656.3 745.7L661.9 745.9L668.1 746.5L674.9 747.6L682.3 749.1L686.6 750.2L691.6 751.6L713.2 758.4L725.6 762.0L731.8 763.5L736.1 764.5L741.0 765.6L746.0 766.4L752.2 767.4L759.6 768.3L767.6 769.2L776.3 770.0L793.6 771.2L817.1 772.5L828.8 772.9L839.9 773.2L853.5 773.4L869.6 773.5L1091.6 773.5L1110.7 773.4L1139.8 772.9L1150.9 772.8L1201.6 773.5L1282.0 773.5Z" fill="#f76000" fill-opacity="0.6" stroke="#000" stroke-opacity="0.7" stroke-width="1.25" stroke-linejoin="round"/><path d="M564.8 803.5L581.5 803.1L587.7 802.8L592.7 802.4L597.6 801.8L601.9 801.2L606.9 800.2L611.2 799.2L615.5 798.0L620.5 796.3L624.8 794.7L629.8 792.7L639.0 788.5L657.6 779.5L660.7 778.1L663.8 776.8L666.8 775.8L671.2 774.7L674.9 774.2L678.0 774.0L681.1 774.2L684.2 774.6L687.2 775.2L691.6 776.3L695.9 777.7L700.8 779.4L722.5 787.5L730.5 790.3L734.8 791.6L739.2 792.7L744.1 793.7L748.4 794.4L753.4 795.0L757.7 795.5L768.8 796.2L776.9 796.5L796.7 796.7L802.9 796.9L810.3 797.4L827.6 798.7L862.8 801.9L877.0 802.8L884.5 803.1L892.5 803.3L912.9 803.4L1282.0 803.5Z" fill="#f64700" fill-opacity="0.6" stroke="#000" stroke-opacity="0.7" stroke-width="1.25" stroke-linejoin="round"/></g><text x="572.5" y="328.1" text-anchor="end" font-family="Liberation Sans" font-size="11" fill="#2c2c2c" stroke="#2c2c2c" stroke-width="0.12">Almost Certainly</text><text x="572.5" y="358.1" text-anchor="end" font-family="Liberation Sans" font-size="11" fill="#2c2c2c" stroke="#2c2c2c" stroke-width="0.12">Highly Likely</text><text x="572.5" y="388.0" text-anchor="end" font-family="Liberation Sans" font-size="11" fill="#2c2c2c" stroke="#2c2c2c" stroke-width="0.12">Very Good Chance</text><text x="572.5" y="418.0" text-anchor="end" font-family="Liberation Sans" font-size="11" fill="#2c2c2c" stroke="#2c2c2c" stroke-width="0.12">Probable</text><text x="572.5" y="447.9" text-anchor="end" font-family="Liberation Sans" font-size="11" fill="#2c2c2c" stroke="#2c2c2c" stroke-width="0.12">Likely</text><text x="572.5" y="477.9" text-anchor="end" font-family="Liberation Sans" font-size="11" fill="#2c2c2c" stroke="#2c2c2c" stroke-width="0.12">Probably</text><text x="572.5" y="507.9" text-anchor="end" font-family="Liberation Sans" font-size="11" fill="#2c2c2c" stroke="#2c2c2c" stroke-width="0.12">We Believe</text><text x="572.5" y="537.8" text-anchor="end" font-family="Liberation Sans" font-size="11" fill="#2c2c2c" stroke="#2c2c2c" stroke-width="0.12">Better Than Even</text><text x="572.5" y="567.8" text-anchor="end" font-family="Liberation Sans" font-size="11" fill="#2c2c2c" stroke="#2c2c2c" stroke-width="0.12">About Even</text><text x="572.5" y="597.7" text-anchor="end" font-family="Liberation Sans" font-size="11" fill="#2c2c2c" stroke="#2c2c2c" stroke-width="0.12">We Doubt</text><text x="572.5" y="627.7" text-anchor="end" font-family="Liberation Sans" font-size="11" fill="#2c2c2c" stroke="#2c2c2c" stroke-width="0.12">Improbable</text><text x="572.5" y="657.7" text-anchor="end" font-family="Liberation Sans" font-size="11" fill="#2c2c2c" stroke="#2c2c2c" stroke-width="0.12">Unlikely</text><text x="572.5" y="687.6" text-anchor="end" font-family="Liberation Sans" font-size="11" fill="#2c2c2c" stroke="#2c2c2c" stroke-width="0.12">Probably Not</text><text x="572.5" y="717.6" text-anchor="end" font-family="Liberation Sans" font-size="11" fill="#2c2c2c" stroke="#2c2c2c" stroke-width="0.12">Little Chance</text><text x="572.5" y="747.5" text-anchor="end" font-family="Liberation Sans" font-size="11" fill="#2c2c2c" stroke="#2c2c2c" stroke-width="0.12">Almost No Chance</text><text x="572.5" y="777.5" text-anchor="end" font-family="Liberation Sans" font-size="11" fill="#2c2c2c" stroke="#2c2c2c" stroke-width="0.12">Highly Unlikely</text><text x="572.5" y="807.5" text-anchor="end" font-family="Liberation Sans" font-size="11" fill="#2c2c2c" stroke="#2c2c2c" stroke-width="0.12">Chances Are Slight</text><text x="614.3" y="871" text-anchor="middle" font-family="Liberation Sans" font-size="11" fill="#2c2c2c" stroke="#2c2c2c" stroke-width="0.12">0%</text><text x="676.1" y="871" text-anchor="middle" font-family="Liberation Sans" font-size="11" fill="#2c2c2c" stroke="#2c2c2c" stroke-width="0.12">10%</text><text x="737.9" y="871" text-anchor="middle" font-family="Liberation Sans" font-size="11" fill="#2c2c2c" stroke="#2c2c2c" stroke-width="0.12">20%</text><text x="799.8" y="871" text-anchor="middle" font-family="Liberation Sans" font-size="11" fill="#2c2c2c" stroke="#2c2c2c" stroke-width="0.12">30%</text><text x="861.6" y="871" text-anchor="middle" font-family="Liberation Sans" font-size="11" fill="#2c2c2c" stroke="#2c2c2c" stroke-width="0.12">40%</text><text x="923.4" y="871" text-anchor="middle" font-family="Liberation Sans" font-size="11" fill="#2c2c2c" stroke="#2c2c2c" stroke-width="0.12">50%</text><text x="985.2" y="871" text-anchor="middle" font-family="Liberation Sans" font-size="11" fill="#2c2c2c" stroke="#2c2c2c" stroke-width="0.12">60%</text><text x="1047.0" y="871" text-anchor="middle" font-family="Liberation Sans" font-size="11" fill="#2c2c2c" stroke="#2c2c2c" stroke-width="0.12">70%</text><text x="1108.9" y="871" text-anchor="middle" font-family="Liberation Sans" font-size="11" fill="#2c2c2c" stroke="#2c2c2c" stroke-width="0.12">80%</text><text x="1170.7" y="871" text-anchor="middle" font-family="Liberation Sans" font-size="11" fill="#2c2c2c" stroke="#2c2c2c" stroke-width="0.12">90%</text><text x="1232.5" y="871" text-anchor="middle" font-family="Liberation Sans" font-size="11" fill="#2c2c2c" stroke="#2c2c2c" stroke-width="0.12">100%</text></svg></body></html>
